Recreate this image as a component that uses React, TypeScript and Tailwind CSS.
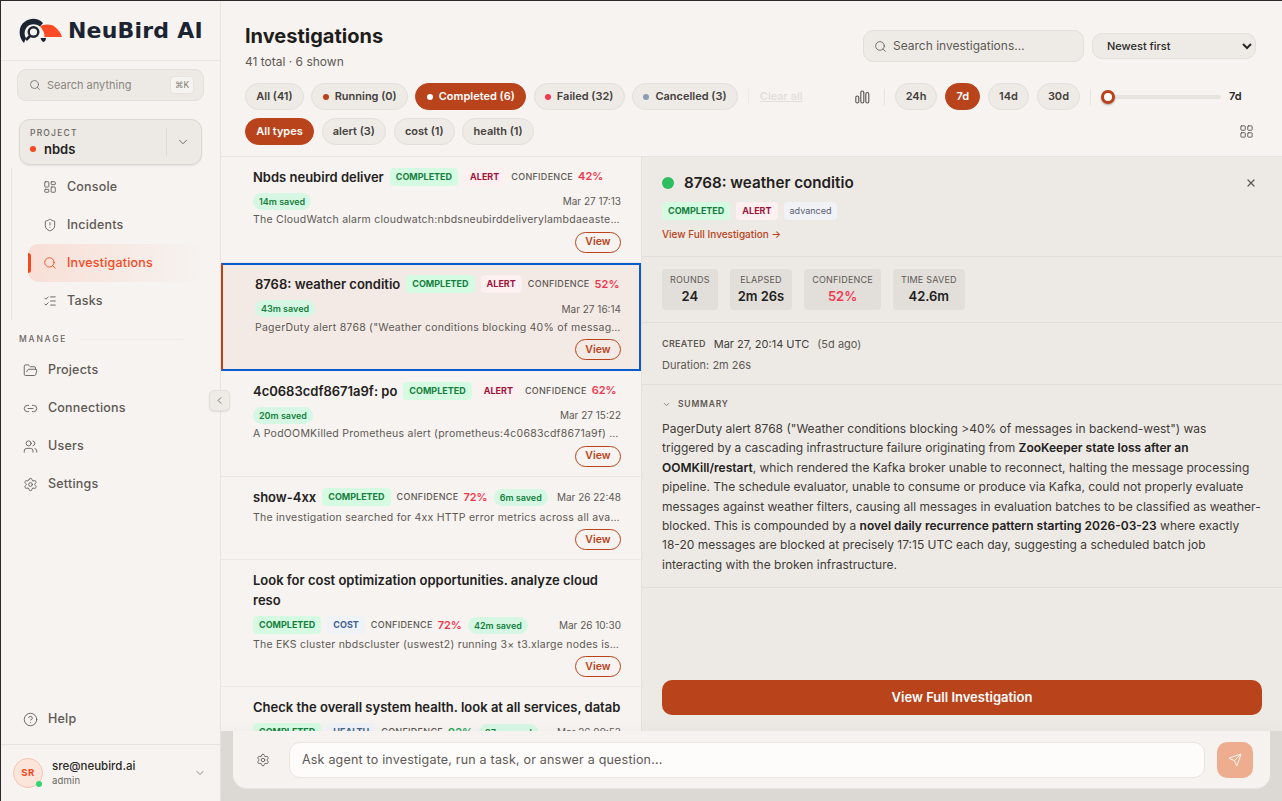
import React from 'react';
import {
  LayoutDashboard,
  ShieldAlert,
  Search,
  ListChecks,
  FolderOpen,
  Link2,
  Users,
  Settings,
  CircleHelp,
  ChevronDown,
  ChevronLeft,
  LayoutGrid,
  Send,
  X,
} from 'lucide-react';

const NeuBirdLogo = () => (
  <svg width="44" height="28" viewBox="0 0 44 28" fill="none">
    <path d="M5 26 C-1 20 -1 9 6 4.500 C12 0.500 19 1 24 6 L21 9.500 C17 6.500 11 6.500 8 10 C5 13.500 5 18 7 21 Z" fill="#1b2430" />
    <circle cx="14.500" cy="15" r="4.800" stroke="#1b2430" strokeWidth="2.400" />
    <path d="M11 19 L7 23" stroke="#1b2430" strokeWidth="2.600" />
    <path d="M21 9.500 C24 7 32 6.500 36 10 C39 12.500 42 16 43 20 L25.500 20 C25.500 16 24 12.500 21 9.500 Z" fill="#ff4a26" />
    <path d="M21.500 21 L27 21 C27 23 26 24.500 24.500 25 C23 24.500 22 23 21.500 21 Z" fill="#1b2430" />
  </svg>
);

const BarsIcon = () => (
  <svg width="15" height="14" viewBox="0 0 15 14" fill="none" stroke="#57534e" strokeWidth="1.100">
    <rect x="0.800" y="6" width="3" height="7" rx="1.500" />
    <rect x="5.800" y="1" width="3" height="12" rx="1.500" />
    <rect x="10.800" y="2.500" width="3" height="10.500" rx="1.500" />
  </svg>
);

const NavItem = ({ icon: Icon, label, active }: { icon: React.ElementType; label: string; active?: boolean }) => (
  <div
    className={`relative flex h-[38px] items-center gap-[10px] rounded-[10px] pl-[15px] ${
      active ? 'bg-gradient-to-r from-[#f8dfd6] to-[#f6f3f0] text-[#f4491f]' : 'text-[#5e5954]'
    }`}
  >
    {active && <span className="absolute left-0 top-[9px] h-[20px] w-[3px] rounded-r bg-[#f4491f]" />}
    <Icon size={14} strokeWidth={1.5} />
    <span className="text-[12.500px] font-medium tracking-[0.2px]">{label}</span>
  </div>
);

const ManageItem = ({ icon: Icon, label }: { icon: React.ElementType; label: string }) => (
  <div className="flex h-[38px] items-center gap-[10px] pl-[4px] text-[#5e5954]">
    <Icon size={15} strokeWidth={1.4} />
    <span className="text-[12.500px] font-medium tracking-[0.2px]">{label}</span>
  </div>
);

const Sidebar = () => (
  <aside className="flex h-full w-[220px] shrink-0 flex-col border-r border-[#e7e3df] bg-[#f6f3f0]">
    <div className="flex h-[60px] shrink-0 items-center gap-[5px] border-b border-[#e9e5e1] pl-[18px]">
      <NeuBirdLogo />
      <span className="text-[22px] font-bold leading-none tracking-[0.2px] text-[#1b2430] [font-family:'DejaVu_Sans',sans-serif]">NeuBird AI</span>
    </div>
    <div className="mx-[16px] mt-[8px] flex h-[32px] items-center rounded-[9px] border border-[#e3dfda] bg-[#edeae6] pl-[11px] pr-[9px] text-[#8b8580]">
      <Search size={12} strokeWidth={1.6} className="text-[#6f6a65]" />
      <span className="ml-[6px] text-[11px]">Search anything</span>
      <span className="ml-auto flex h-[18px] w-[24px] items-center justify-center rounded-[4px] border border-[#e6e2dd] bg-[#f6f4f1] text-[8.500px] text-[#807a75]">⌘K</span>
    </div>
    <div className="mx-[18px] mt-[18px] flex h-[46px] items-center rounded-[11px] border border-[#dcd8d2] bg-[#edeae5] pl-[10px] shadow-[0_1px_2px_rgba(0,0,0,0.08)]">
      <div className="flex-1">
        <div className="text-[8.500px] font-medium leading-[12px] tracking-[1.200px] text-[#6b6661]">PROJECT</div>
        <div className="mt-[1px] flex items-center gap-[8px]">
          <span className="h-[6px] w-[6px] rounded-full bg-[#f4491f]" />
          <span className="text-[13px] font-semibold leading-[18px] text-[#232120]">nbds</span>
        </div>
      </div>
      <div className="flex h-[28px] w-[35px] items-center justify-center border-l border-[#dfdbd6] pr-[3px] text-[#5e5954]">
        <ChevronDown size={14} strokeWidth={1.5} />
      </div>
    </div>
    <div className="ml-[10px] mr-[17px] mt-[3px] border-l border-[#e7e3df] pl-[16px]">
      <NavItem icon={LayoutDashboard} label="Console" />
      <NavItem icon={ShieldAlert} label="Incidents" />
      <NavItem icon={Search} label="Investigations" active />
      <NavItem icon={ListChecks} label="Tasks" />
    </div>
    <div className="mt-[13px] flex items-center gap-[12px] pl-[18px] pr-[37px]">
      <span className="text-[8.500px] font-medium tracking-[1.800px] text-[#6b6661]">MANAGE</span>
      <span className="h-px flex-1 bg-[#efebe7]" />
    </div>
    <div className="mt-[6px] px-[18px]">
      <ManageItem icon={FolderOpen} label="Projects" />
      <ManageItem icon={Link2} label="Connections" />
      <ManageItem icon={Users} label="Users" />
      <ManageItem icon={Settings} label="Settings" />
    </div>
    <div className="mt-auto px-[18px] pb-[6px]">
      <ManageItem icon={CircleHelp} label="Help" />
    </div>
    <div className="flex h-[57px] shrink-0 items-center border-t border-[#e7e3df] pl-[12px] pr-[14px]">
      <div className="relative flex h-[30px] w-[30px] items-center justify-center rounded-full border border-[#f6c3b1] bg-[#fbe4da] text-[9.500px] font-bold tracking-[0.5px] text-[#f4491f]">
        SR
        <span className="absolute bottom-[0px] right-[0px] h-[6px] w-[6px] rounded-full bg-[#35d36f]" />
      </div>
      <div className="ml-[9px] flex-1">
        <div className="text-[11.500px] font-medium leading-[14px] text-[#2b2926]">sre@neubird.ai</div>
        <div className="mt-[2px] text-[9.500px] leading-[12px] tracking-[0.2px] text-[#6b6661]">admin</div>
      </div>
      <ChevronDown size={12} strokeWidth={1.5} className="text-[#6b6661]" />
    </div>
  </aside>
);

const Pill = ({ label, dot, active, compact }: { label: string; dot?: string; active?: boolean; compact?: boolean }) => (
  <span
    className={`flex h-[27px] shrink-0 items-center gap-[6px] whitespace-nowrap rounded-full border text-[11px] font-semibold ${
      compact ? 'px-[10px]' : 'px-[10.250px]'
    } ${active ? 'border-[#b9431a] bg-[#b9431a] text-white' : 'border-[#e3dfda] bg-[#eeebe7] text-[#44403c]'}`}
  >
    {dot && <span className={`h-[6px] w-[6px] rounded-full ${dot}`} />}
    {label}
  </span>
);

const Header = () => (
  <header className="h-[156px] shrink-0 border-b border-[#e9e5e1] pl-[24px] pr-[26px] pt-[21px]">
    <div className="flex h-[51px] items-start">
      <div>
        <h1 className="text-[20px] font-bold leading-[28px] text-[#1f1d1b]">Investigations</h1>
        <p className="mt-[4px] text-[12px] leading-[16px] text-[#5e5954]">41 total · 6 shown</p>
      </div>
      <div className="ml-auto mt-[8px] flex h-[32px] w-[221px] items-center gap-[6px] rounded-[10px] border border-[#e3dfda] bg-[#eeebe7] pl-[10px] text-[12px] text-[#5e5954]">
        <Search size={13} strokeWidth={1.5} />
        Search investigations...
      </div>
      <div className="ml-[8px] mt-[11px] flex h-[26px] w-[164px] items-center">
        <select className="h-full w-full rounded-[10px] border border-[#e3dfda] bg-[#eeebe7] pl-[10px] text-[11px] font-medium text-[#2b2926]">
          <option>Newest first</option>
        </select>
      </div>
    </div>
    <div className="mt-[10px] flex items-center">
      <div className="flex items-center gap-[7.500px]">
        <Pill label="All (41)" />
        <Pill label="Running (0)" dot="bg-[#b9431a]" />
        <Pill label="Completed (6)" dot="bg-white" active />
        <Pill label="Failed (32)" dot="bg-[#f0384f]" />
        <Pill label="Cancelled (3)" dot="bg-[#8a9bb3]" />
      </div>
      <span className="ml-[10px] h-[16px] w-px bg-[#efebe7]" />
      <span className="ml-[11px] whitespace-nowrap text-[11px] font-medium text-[#e2ded9] underline">Clear all</span>
      <div className="ml-auto flex items-center">
        <BarsIcon />
        <span className="ml-[14px] h-[16px] w-px bg-[#e7e3df]" />
        <div className="ml-[10px] flex items-center gap-[8px]">
          <Pill label="24h" compact />
          <Pill label="7d" active compact />
          <Pill label="14d" compact />
          <Pill label="30d" compact />
        </div>
        <span className="ml-[10px] h-[16px] w-px bg-[#e7e3df]" />
        <div className="relative ml-[10px] h-[4px] w-[120px] rounded-full bg-[#e7e4e0]">
          <span className="absolute left-0 top-[-5px] h-[14px] w-[14px] rounded-full border-[3px] border-[#b9431a] bg-white shadow-[0_1px_2px_rgba(0,0,0,0.3)]" />
        </div>
        <span className="ml-[8px] w-[27px] text-[11px] font-semibold text-[#2b2926]">7d</span>
      </div>
    </div>
    <div className="mt-[8px] flex items-center gap-[7.500px]">
      <Pill label="All types" active />
      <Pill label="alert (3)" />
      <Pill label="cost (1)" />
      <Pill label="health (1)" />
      <LayoutGrid size={15} strokeWidth={1.5} className="ml-auto mr-[2px] text-[#5e5954]" />
    </div>
  </header>
);

const Tag = ({ label, className }: { label: string; className: string }) => (
  <span className={`rounded-[4px] px-[6px] py-[3px] text-[9px] font-bold leading-[12px] ${className}`}>{label}</span>
);

const Confidence = ({ value, color = 'text-[#f0384f]' }: { value: string; color?: string }) => (
  <span className="flex items-center gap-[5px]">
    <span className="text-[9px] font-medium tracking-[0.3px] text-[#5e5954]">CONFIDENCE</span>
    <span className={`text-[11px] font-semibold ${color}`}>{value}</span>
  </span>
);

const Saved = ({ label }: { label: string }) => (
  <span className="rounded-full bg-[#d5f7e3] px-[6px] py-[2px] text-[9px] font-semibold leading-[13px] text-[#15803d]">{label}</span>
);

const Completed = () => <Tag label="COMPLETED" className="bg-[#d6fbe3] text-[#15803d]" />;
const Alert = () => <Tag label="ALERT" className="bg-[#fdf0f1] text-[#9f1239]" />;

const Row = ({
  title,
  tags,
  date,
  text,
  selected,
  className,
}: {
  title: string;
  tags: React.ReactNode;
  date: string;
  text: string;
  selected?: boolean;
  className?: string;
}) => (
  <div
    className={`shrink-0 ${
      selected
        ? 'border-[2px] border-[#0b5ccb] border-l-[#b9431a] bg-[#f3eae6] pl-[32px] pr-[18px]'
        : 'border-b border-[#ece8e4] pl-[32px] pr-[20px]'
    } ${className ?? ''}`}
  >
    <div className="flex flex-wrap items-center gap-x-[6px] gap-y-[6px]">
      <span className="text-[13px] font-semibold leading-[20px] text-[#232120]">{title}</span>
      {tags}
      <span className="ml-auto text-[10px] leading-[14px] text-[#5e5954]">{date}</span>
    </div>
    <p className="mt-[3.500px] truncate text-[10.500px] leading-[14px] tracking-[0.25px] text-[#5e5954]">{text}</p>
    <div className="mt-[4.500px] flex justify-end">
      <span className="flex h-[21px] w-[46px] items-center justify-center rounded-full border border-[#b9431a] text-[10.500px] font-semibold text-[#b9431a]">View</span>
    </div>
  </div>
);

const List = () => (
  <div className="flex w-[421px] shrink-0 flex-col overflow-hidden border-r border-[#e3dfda]">
    <Row
      className="h-[106px] pt-[9.500px]"
      title="Nbds neubird deliver"
      tags={<><Completed /><Alert /><Confidence value="42%" /><Saved label="14m saved" /></>}
      date="Mar 27 17:13"
      text="The CloudWatch alarm cloudwatch:nbdsneubirddeliverylambdaeasterrors triggered"
    />
    <Row
      selected
      className="h-[108px] pt-[9px]"
      title="8768: weather conditio"
      tags={<><Completed /><Alert /><Confidence value="52%" /><Saved label="43m saved" /></>}
      date="Mar 27 16:14"
      text={'PagerDuty alert 8768 ("Weather conditions blocking 40% of messages in backend-west")'}
    />
    <Row
      className="h-[106px] pt-[9.500px]"
      title="4c0683cdf8671a9f: po"
      tags={<><Completed /><Alert /><Confidence value="62%" /><Saved label="20m saved" /></>}
      date="Mar 27 15:22"
      text="A PodOOMKilled Prometheus alert (prometheus:4c0683cdf8671a9f) was investigated"
    />
    <Row
      className="h-[83px] pt-[10px]"
      title="show-4xx"
      tags={<><Completed /><Confidence value="72%" /><Saved label="6m saved" /></>}
      date="Mar 26 22:48"
      text="The investigation searched for 4xx HTTP error metrics across all available sources"
    />
    <Row
      className="h-[127px] pt-[10px]"
      title="Look for cost optimization opportunities. analyze cloud reso"
      tags={<><Completed /><Tag label="COST" className="bg-[#eff3f8] text-[#44618a]" /><Confidence value="72%" /><Saved label="42m saved" /></>}
      date="Mar 26 10:30"
      text="The EKS cluster nbdscluster (uswest2) running 3× t3.xlarge nodes is overprovisioned"
    />
    <Row
      className="h-[127px] pt-[10px]"
      title="Check the overall system health. look at all services, datab"
      tags={<><Completed /><Tag label="HEALTH" className="bg-[#eff3f8] text-[#44618a]" /><Confidence value="92%" color="text-[#22a559]" /><Saved label="27m saved" /></>}
      date="Mar 26 09:53"
      text="The overall system health check looked at all services and databases"
    />
  </div>
);

const Stat = ({ label, value, color = 'text-[#232120]' }: { label: string; value: string; color?: string }) => (
  <div className="flex h-[41px] flex-col items-center justify-center rounded-[4px] bg-[#e2dfda] px-[8px]">
    <span className="text-[9px] leading-[12px] tracking-[0.2px] text-[#5e5954]">{label}</span>
    <span className={`mt-[1px] text-[13px] font-semibold leading-[18px] ${color}`}>{value}</span>
  </div>
);

const Detail = () => (
  <div className="flex min-w-0 flex-1 flex-col bg-[#edeae5]">
    <div className="h-[100px] shrink-0 border-b border-[#e2dfda] pl-[20px] pr-[25px] pt-[15px]">
      <div className="flex h-[22px] items-center">
        <span className="h-[12px] w-[12px] rounded-full bg-[#2ebd5f]" />
        <span className="ml-[10px] text-[15.200px] font-semibold text-[#232120]">8768: weather conditio</span>
        <X size={12} strokeWidth={2.400} className="ml-auto text-[#5e5954]" />
      </div>
      <div className="mt-[8px] flex items-center gap-[6px]">
        <Completed />
        <Alert />
        <span className="rounded-[4px] bg-[#f1f2f6] px-[6px] py-[3px] text-[9px] leading-[12px] text-[#5b6070]">advanced</span>
      </div>
      <div className="mt-[7px] text-[10px] font-medium leading-[14px] text-[#b9431a]">View Full Investigation →</div>
    </div>
    <div className="flex h-[66px] shrink-0 items-center gap-[12px] border-b border-[#e2dfda] pl-[20px]">
      <Stat label="ROUNDS" value="24" />
      <Stat label="ELAPSED" value="2m 26s" />
      <Stat label="CONFIDENCE" value="52%" color="text-[#f0384f]" />
      <Stat label="TIME SAVED" value="42.6m" />
    </div>
    <div className="h-[62px] shrink-0 border-b border-[#e2dfda] pl-[20px] pt-[14px] text-[11px] leading-[14px] text-[#5e5954]">
      <div className="flex items-center">
        <span className="text-[9px] font-semibold tracking-[0.3px]">CREATED</span>
        <span className="ml-[8px] text-[#44403c]">Mar 27, 20:14 UTC</span>
        <span className="ml-[8px]">(5d ago)</span>
      </div>
      <div className="mt-[7px]">Duration: 2m 26s</div>
    </div>
    <div className="h-[203px] shrink-0 border-b border-[#e2dfda] pl-[20px] pr-[21px] pt-[13px]">
      <div className="flex items-center gap-[7px] text-[#5e5954]">
        <ChevronDown size={9} strokeWidth={1.8} />
        <span className="text-[8.500px] font-semibold leading-[12px] tracking-[0.8px]">SUMMARY</span>
      </div>
      <p className="mt-[9px] text-[12px] leading-[19.400px] text-[#3f3b38]">
        PagerDuty alert 8768 ("Weather conditions blocking &gt;40% of messages in backend-west") was triggered by a cascading infrastructure failure originating from{' '}
        <b className="font-semibold text-[#232120]">ZooKeeper state loss after an OOMKill/restart</b>, which rendered the Kafka broker unable to reconnect, halting the message processing pipeline. The schedule evaluator, unable to consume or produce via Kafka, could not properly evaluate messages against weather filters, causing all messages in evaluation batches to be classified as weather-blocked. This is compounded by a{' '}
        <b className="font-semibold text-[#232120]">novel daily recurrence pattern starting 2026-03-23</b> where exactly <span className="whitespace-nowrap">18-20</span> messages are blocked at precisely 17:15 UTC each day, suggesting a scheduled batch job interacting with the broken infrastructure.
      </p>
    </div>
    <div className="mt-auto px-[20px] pb-[16px]">
      <div className="flex h-[35px] items-center justify-center rounded-[10px] bg-[#b9431a] text-[13px] font-semibold text-white">View Full Investigation</div>
    </div>
  </div>
);

const Dock = () => (
  <div className="relative h-[70px] shrink-0 bg-[#dcd8d3] px-[12px] shadow-[0_-6px_12px_rgba(0,0,0,0.02)]">
    <div className="flex h-[58px] items-center rounded-b-[14px] border-b border-[#e9e5e1] bg-[#f5f2ef] pl-[23px] pr-[17px] pt-[1px]">
      <Settings size={14} strokeWidth={1.5} className="text-[#5e5954]" />
      <div className="ml-[19px] flex h-[36px] flex-1 items-center rounded-[11px] border border-[#e9e6e2] bg-[#fdfcfb] pl-[12px] text-[12.500px] tracking-[0.2px] text-[#5e5954]">
        Ask agent to investigate, run a task, or answer a question...
      </div>
      <div className="ml-[12px] flex h-[36px] w-[36px] items-center justify-center rounded-[10px] bg-[#efad8f] text-white">
        <Send size={14} strokeWidth={1.5} />
      </div>
    </div>
  </div>
);

export default function App() {
  return (
    <div className="relative flex h-screen w-full overflow-hidden border-l border-t border-[#2a2a2a] bg-[#f6f3f0] [font-family:Inter,sans-serif]">
      <Sidebar />
      <main className="flex min-w-0 flex-1 flex-col">
        <Header />
        <div className="flex min-h-0 flex-1">
          <List />
          <Detail />
        </div>
        <Dock />
      </main>
      <div className="absolute left-[208px] top-[389px] flex h-[21px] w-[21px] items-center justify-center rounded-[5px] border border-[#e3dfda] bg-[#eeebe7] text-[#5e5954] shadow-[0_1px_2px_rgba(0,0,0,0.1)]">
        <ChevronLeft size={11} strokeWidth={1.8} />
      </div>
    </div>
  );
}
